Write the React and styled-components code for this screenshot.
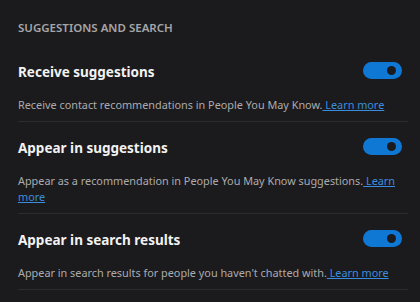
import React, { useState } from "react";
import styled, { createGlobalStyle } from "styled-components";

const GlobalStyle = createGlobalStyle`
  html, body {
    margin: 0;
    padding: 0;
    background: #1b1b1d;
  }
  body {
    font-family: "Noto Sans", "Open Sans", sans-serif;
  }
`;

const settings = [
  {
    id: "receive",
    title: "Receive suggestions",
    text: "Receive contact recommendations in People You May Know.",
  },
  {
    id: "appear",
    title: "Appear in suggestions",
    text: "Appear as a recommendation in People You May Know suggestions.",
  },
  {
    id: "search",
    title: "Appear in search results",
    text: "Appear in search results for people you haven't chatted with.",
  },
];

const App = () => {
  const [values, setValues] = useState({
    receive: true,
    appear: true,
    search: true,
  });

  const toggleHandler = (id) => {
    setValues({ ...values, [id]: !values[id] });
  };

  return (
    <>
      <GlobalStyle />
      <Wrapper>
        <Heading>SUGGESTIONS AND SEARCH</Heading>
        {settings.map((item) => (
          <Row key={item.id}>
            <div className="top">
              <h3>{item.title}</h3>
              <Toggle
                type="button"
                $on={values[item.id]}
                onClick={() => toggleHandler(item.id)}
                aria-pressed={values[item.id]}
              />
            </div>
            <p>
              {item.text}
              <a href="#"> Learn more</a>
            </p>
          </Row>
        ))}
      </Wrapper>
    </>
  );
};

const Wrapper = styled.div`
  width: 420px;
  height: 302px;
  box-sizing: border-box;
  padding: 20px 12px 0 18px;
  background: #1b1b1d;
  overflow: hidden;
`;

const Heading = styled.h2`
  margin: 0 0 26px;
  font-size: 11.5px;
  font-weight: 600;
  color: #a6a6a8;
  line-height: 16px;
`;

const Row = styled.div`
  border-bottom: 1px solid #2c2c2f;
  padding-bottom: 8px;
  margin-bottom: 16px;
  .top {
    display: flex;
    align-items: center;
    justify-content: space-between;
    height: 20px;
    margin-bottom: 15px;
  }
  h3 {
    margin: 0;
    font-size: 13.5px;
    font-weight: 700;
    color: #f2f2f2;
  }
  p {
    margin: 0;
    font-size: 10.85px;
    line-height: 16px;
    color: #ababad;
    padding-right: 4px;
  }
  a {
    color: #3a8dde;
    text-decoration: underline;
  }
`;

const Toggle = styled.button`
  position: relative;
  width: 39px;
  height: 17px;
  border: none;
  border-radius: 9px;
  padding: 0;
  margin: -3px 6px 0 0;
  background: ${(p) => (p.$on ? "#0f78d4" : "#4a4a4d")};
  cursor: pointer;
  &::after {
    content: "";
    position: absolute;
    top: 4px;
    left: 24px;
    width: 9px;
    height: 9px;
    border-radius: 50%;
    background: #1b1b1d;
  }
`;

export default App;
